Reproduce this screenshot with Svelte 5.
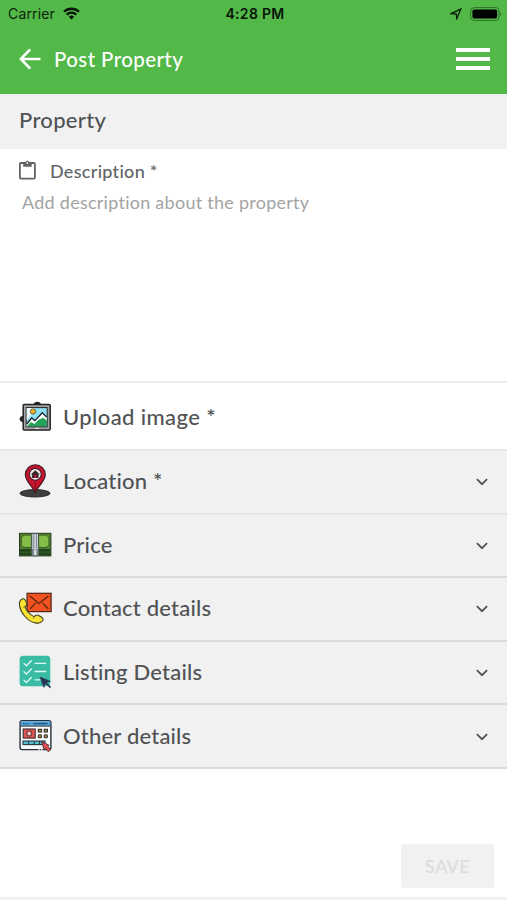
<script>
	const SECTIONS = [
		{ id: 'image', label: 'Upload image *' },
		{ id: 'location', label: 'Location *' },
		{ id: 'price', label: 'Price' },
		{ id: 'contact', label: 'Contact details' },
		{ id: 'listing', label: 'Listing Details' },
		{ id: 'other', label: 'Other details' }
	];

	let description = $state('');
</script>

<div class="screen">
	<header>
		<div class="status">
			<div class="carrier">
				<span>Carrier</span>
				<svg width="17" height="13" viewBox="0 0 17 13" aria-hidden="true">
					<g fill="none" stroke="#071407" stroke-width="2.3">
						<path d="M1 4.8a10.7 10.7 0 0 1 15 0" />
						<path d="M3.7 7.7a6.8 6.8 0 0 1 9.6 0" />
					</g>
					<path d="M5.8 9.8a3.9 3.9 0 0 1 5.4 0L8.5 12.6z" fill="#071407" />
				</svg>
			</div>
			<span class="time">4:28 PM</span>
			<div class="indicators">
				<svg width="12" height="12" viewBox="0 0 12 12" aria-hidden="true">
					<path d="M10.8 1 6.8 10.6 6.2 6 1 5.6z" fill="none" stroke="#0c240b" stroke-width="1.4" />
				</svg>
				<svg width="32" height="14" viewBox="0 0 32 14" aria-hidden="true">
					<rect x=".6" y=".6" width="28.5" height="12.8" rx="3.6" fill="none" stroke="#2f7029" />
					<rect x="2.4" y="2.4" width="24.8" height="9.2" rx="2" fill="#000" />
					<path d="M30.3 4.8q2 2.2 0 4.4z" fill="#2f7029" />
				</svg>
			</div>
		</div>
		<div class="toolbar">
			<button class="plain" aria-label="Back">
				<svg width="22" height="22" viewBox="0 0 22 22" aria-hidden="true">
					<path d="M21.5 11H2M11.2 1.4 1.8 11l9.4 9.6" fill="none" stroke="#fff" stroke-width="2.7" />
				</svg>
			</button>
			<h1>Post Property</h1>
			<button class="plain menu" aria-label="Menu">
				<span></span>
				<span></span>
				<span></span>
			</button>
		</div>
	</header>

	<h2>Property</h2>

	<section class="description">
		<label for="description">
			<svg width="19" height="22" viewBox="0 0 19 22" aria-hidden="true">
				<rect x="1.9" y="4" width="15" height="15.6" rx="1" fill="none" stroke="#626466" stroke-width="1.8" />
				<path d="M5.2 3.4h1.9a2.5 2.5 0 0 1 4.7 0h1.9v4.4H5.2z" fill="#626466" />
				<circle cx="9.4" cy="3.9" r=".9" fill="#fff" />
			</svg>
			<span>Description *</span>
		</label>
		<textarea id="description" placeholder="Add description about the property" bind:value={description}></textarea>
	</section>

	{#each SECTIONS as { id, label } (id)}
		<div class="row {id}">
			<svg class="icon" width="34" height="34" viewBox="0 0 34 34" aria-hidden="true">
				{#if id === 'image'}
					<path d="M15.5 4.5q.7-2.7 3.8-2.7t3.8 2.7zM5 15.5q-3.4 1.3-3.4 3.5T5 22.5z" fill="#24262a" />
					<rect x="5.2" y="4.6" width="27" height="25.4" rx="1" fill="#a6a4a6" stroke="#232225" stroke-width="1.5" />
					<rect x="8.2" y="7.6" width="21" height="19.2" fill="#8edff2" stroke="#232225" />
					<path d="M8.7 8.1h8l-5 9-3 3z" fill="#eefafc" />
					<circle cx="15" cy="11.4" r="2.6" fill="#f5b42c" stroke="#3b3222" stroke-width=".7" />
					<path d="m8.7 24.4 5-6.2 3.2 2.6 7.4-7.8 4.4 4.2v9.1h-20z" fill="#24a356" />
					<path d="m8.7 24.4 5-6.2 3.2 2.6 7.4-7.8 4.4 4.2v3.4l-3.4-2.8-4.7 2-4.1 4.1-3.7-2-3.7 4.4h-.4z" fill="#fff" />
					<path d="m8.7 24 5-6 3.2 2.6 7.4-7.8 4.4 4.3" fill="none" stroke="#17252b" stroke-width="1.3" />
					<path d="M17 28.4h4" stroke="#eee" />
				{:else if id === 'location'}
					<ellipse cx="17" cy="29.3" rx="15.1" ry="3.7" fill="#3f3f42" stroke="#222" stroke-width=".9" />
					<path d="M17.2 28.6C15.6 23.8 7.3 17 7.3 10.7a10 10 0 0 1 20 0c0 6.3-8.5 13.1-10.1 17.9z" fill="#c9142d" stroke="#3a1820" stroke-width="1.1" />
					<path d="M17.2 28V17.5" stroke="#5f1220" stroke-width=".8" />
					<circle cx="17.3" cy="10.3" r="5.9" fill="#f4efef" stroke="#41202a" stroke-width="1.1" />
					<path d="m17.3 6.2 4.6 4.2h-1.4v3.5h-6.4v-3.5h-1.4z" fill="#37252b" />
					<path d="M16.3 10.6h2v3.3h-2z" fill="#c9142d" />
				{:else if id === 'price'}
					<rect x="1.5" y="5.3" width="31.4" height="22.6" fill="#54812f" stroke="#263b1d" />
					<path d="M2 21h30.4v6.4H2z" fill="#23451d" />
					<path d="M2 24.2h30.4" stroke="#3c652a" stroke-width=".8" />
					<path d="M5.9 7.1h7.5v12.4H5.9l-2.6-2.3V9.4zM28.4 7.1h-7.7v12.4h7.7l2.6-2.3V9.4z" fill="#83bd48" stroke="#315322" stroke-width=".9" />
					<path d="M13.7 5.5h6.8v22.2h-6.8z" fill="#cbd0d6" stroke="#41474b" stroke-width=".8" />
					<path d="M15.8 5.5v15.1m2.7-15.1v15.1" stroke="#656b73" stroke-width=".7" />
					<path d="M13.9 21h6.4v6.5h-6.4z" fill="#7b878c" />
					<path d="M16 21.5h2.5v5.5H16z" fill="#d5dadc" />
				{:else if id === 'contact'}
					<rect x="9.1" y="2.3" width="24" height="18.3" fill="#f15320" stroke="#502116" stroke-width="1.2" />
					<path d="m11.8 5 9.1 7.4L30.5 5M12.2 17.8l5.6-6.2m12.6 6.4-5.8-6.2" fill="none" stroke="#55200f" stroke-width="1.2" />
					<path d="M2.6 9.2q2.5-2.7 4.3-.6l2 3.7q.5 2-1.9 3.4c.8 3.5 5.2 8.5 9.2 10q2.1-2.5 4-1.4l4.2 2.5q1.6 1.4-.4 3.6-2.6 2.4-6.5 1.5C9.6 30.6 2.1 21.6 1.4 13.4q-.2-2.5 1.2-4.2z" fill="#f8e332" stroke="#44401c" stroke-width="1.1" />
					<path d="m7.2 15.5-2.1 1m11.1 9.3-1 2.1" stroke="#837822" stroke-width=".8" />
				{:else if id === 'listing'}
					<rect x="1.6" y=".8" width="30.7" height="30.4" rx="3.5" fill="#3abca4" />
					<g fill="none" stroke="#e1f7f3" stroke-width="1.3" stroke-linecap="round" stroke-linejoin="round">
						<path d="m6 8.5 2.5 2.2 4.8-5M6 16.8 8.5 19l4.8-5M6 25.3l2.5 2.2 4.8-5" />
						<path d="M17.2 8.3h10.5M17.2 16.5h10.5M17.2 24.8h4.7" />
					</g>
					<path d="m22 22 10.4 4.2-4 1.6 4.4 4.2-.9.9-4.3-4.3-1.7 3.9z" fill="#293653" stroke="#293653" stroke-width=".5" />
				{:else}
					<rect x="2.1" y="2.6" width="30.8" height="29" rx="2" fill="#f9fafb" stroke="#24313b" stroke-width="1.4" />
					<path d="M2.8 3.3h29.4v4.5H2.8z" fill="#4da4da" />
					<path d="M2.5 8.1h30" stroke="#24313b" />
					<path d="M5 5.6h6" stroke="#1c506f" stroke-width="1.3" stroke-dasharray="1.2 1.1" />
					<path d="M15.5 5.6h14" stroke="#245572" stroke-width="1.3" />
					<rect x="5.2" y="11" width="12" height="9.1" fill="#e75656" stroke="#392b2e" stroke-width="1.1" />
					<circle cx="11.2" cy="15.5" r="2.7" fill="#e78582" stroke="#392b2e" stroke-width=".9" />
					<path d="m10.5 14.1 2.2 1.4-2.2 1.4z" fill="#fff" />
					<g fill="#a88b56" stroke="#37342c" stroke-width="1.1">
						<rect x="20.3" y="11.3" width="3.2" height="2.7" />
						<rect x="26.2" y="11.3" width="3.2" height="2.7" />
						<rect x="20.3" y="16.8" width="3.2" height="3" rx="1" />
						<rect x="26.2" y="16.8" width="3.2" height="3" rx="1" />
					</g>
					<rect x="5" y="23" width="22" height="3.6" fill="#54bccc" stroke="#263840" stroke-width="1.1" />
					<path d="M10.7 23v3.6m5.6-3.6v3.6m5.2-3.6v3.6" stroke="#263840" />
					<path d="M20.5 31.7h1.2m1.4 0h1.3" stroke="#f9fafb" stroke-width="1.6" />
					<path d="m23.5 23.5 7.5 3.7-1 1.4 2.7 3.2-2.4 1.9-2.7-3.2-1.5 1z" fill="#e54e55" stroke="#492931" stroke-width=".9" />
				{/if}
			</svg>
			<span class="label">{label}</span>
			{#if id !== 'image'}
				<svg class="chevron" width="14" height="10" viewBox="0 0 14 10" aria-hidden="true">
					<path d="m1.9 2.2 5.1 5 5.1-5" fill="none" stroke="#4d4f51" stroke-width="1.7" />
				</svg>
			{/if}
		</div>
	{/each}

	<footer>
		<button class="save" disabled>SAVE</button>
	</footer>
</div>

<style>
	:global(body) {
		background: #fff;
	}

	.screen {
		display: flex;
		flex-direction: column;
		box-sizing: border-box;
		width: 100%;
		height: 900px;
		overflow: hidden;
		border-bottom: 3px solid #f1f1f1;
		font-family: Lato, sans-serif;
		font-weight: 500;
		color: #505254;
	}

	header {
		height: 94px;
		flex: none;
		background: #52b848;
	}

	.status {
		display: grid;
		grid-template-columns: 1fr auto 1fr;
		align-items: center;
		height: 27px;
		padding: 0 5px 0 8px;
		font-family: Inter, sans-serif;
		font-size: 14px;
		font-weight: 400;
		color: #0c240b;
	}

	.carrier,
	.indicators {
		display: flex;
		align-items: center;
		gap: 8px;
	}

	.carrier span {
		letter-spacing: 0.15px;
	}

	.indicators {
		justify-content: flex-end;
	}

	.time {
		font-weight: 600;
		letter-spacing: 0.3px;
		color: #071407;
	}

	.toolbar {
		display: flex;
		align-items: center;
		height: 63px;
		padding: 0 17px 0 19px;
	}

	h1 {
		flex: 1;
		margin: 1px 0 0 13px;
		font-size: 20.5px;
		font-weight: 500;
		letter-spacing: 0.4px;
		color: #fff;
	}

	.plain {
		display: flex;
		padding: 0;
		border: 0;
		background: none;
	}

	.menu {
		flex-direction: column;
		gap: 5px;
	}

	.menu span {
		width: 34px;
		height: 4px;
		background: #fff;
	}

	h2 {
		flex: none;
		height: 55px;
		margin: 0;
		padding-left: 19px;
		background: #f1f1f1;
		font-size: 22px;
		font-weight: 500;
		line-height: 51px;
		letter-spacing: 0.3px;
	}

	.description {
		display: flex;
		flex: none;
		flex-direction: column;
		box-sizing: border-box;
		height: 234px;
		border-bottom: 2px solid #ebebeb;
	}

	label {
		display: flex;
		align-items: center;
		gap: 13px;
		height: 42px;
		padding-left: 18px;
		font-size: 18px;
		letter-spacing: 0.3px;
		color: #626466;
	}

	label span {
		margin-top: 2px;
	}

	textarea {
		flex: 1;
		padding: 0 22px;
		border: 0;
		outline: 0;
		resize: none;
		background: none;
		font: 18px/22px Lato, sans-serif;
		letter-spacing: 0.26px;
	}

	textarea::placeholder {
		color: #a3a3a3;
		opacity: 1;
	}

	.row {
		display: flex;
		flex: none;
		align-items: center;
		box-sizing: border-box;
		height: 63.6px;
		padding: 0 18px 2px;
		border-bottom: 2px solid #dadada;
		background: #f1f1f1;
	}

	.row.image {
		height: 68px;
		padding-bottom: 0;
		background: #fff;
		border-color: #e7e7e7;
	}

	.row.location {
		border-color: #e5e5e5;
	}

	.image .icon {
		margin-top: 2px;
	}

	.location .icon,
	.price .icon {
		margin-top: 1px;
	}

	.label {
		flex: 1;
		margin-left: 11px;
		font-size: 22px;
		letter-spacing: 0.2px;
	}

	.image .label {
		margin-top: 1px;
		letter-spacing: 0.4px;
	}

	.chevron {
		margin-top: 3px;
	}

	footer {
		display: flex;
		flex: 1;
		align-items: flex-end;
		justify-content: flex-end;
		padding: 0 13px 9px;
	}

	.save {
		width: 93px;
		height: 44px;
		padding: 0 0 1px;
		border: 0;
		border-radius: 3px;
		background: #f1f1f1;
		font: 500 18px Lato, sans-serif;
		letter-spacing: 0.4px;
		color: #dcdcdc;
	}
</style>
